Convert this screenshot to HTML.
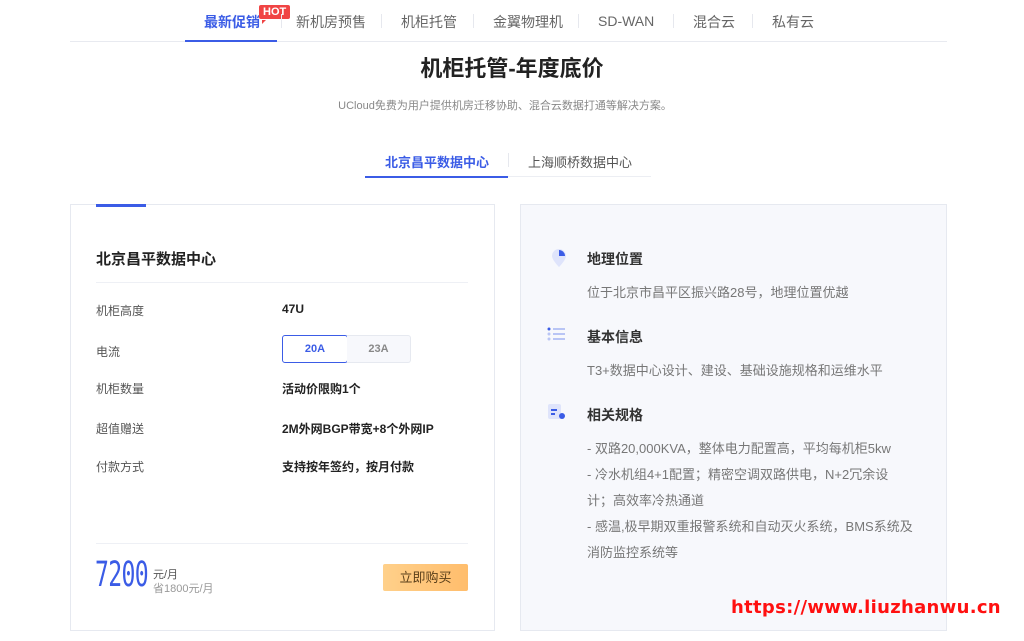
<!DOCTYPE html>
<html><head><meta charset="utf-8"><style>
*{margin:0;padding:0;box-sizing:border-box}
body{width:1024px;height:641px;overflow:hidden;background:#fff;font-family:"Liberation Sans","Noto Sans CJK SC",sans-serif;position:relative;color:#333}
.a{position:absolute;white-space:nowrap}
.nav{font-size:14px;color:#666;top:12px}
.sep{position:absolute;top:14px;width:1px;height:14px;background:#e6e8ee}
.lbl{font-size:12px;color:#555}
.val{font-size:12px;color:#222;font-weight:bold}
.rt{font-size:14px;font-weight:bold;color:#333}
.rd{font-size:13px;color:#777}
</style></head><body>
<div class="a nav" style="left:204px;color:#3b5ce6;font-weight:bold">最新促销</div>
<div class="a" style="left:259px;top:5px;background:#f04444;color:#fff;font-size:11px;font-weight:bold;padding:1px 4px;border-radius:2px">HOT</div>
<div class="a" style="left:262px;top:20px;width:0;height:0;border-left:4px solid #f04444;border-bottom:4px solid transparent"></div>
<div class="sep" style="left:281px"></div>
<div class="a nav" style="left:296px">新机房预售</div>
<div class="sep" style="left:381px"></div>
<div class="a nav" style="left:401px">机柜托管</div>
<div class="sep" style="left:473px"></div>
<div class="a nav" style="left:493px">金翼物理机</div>
<div class="sep" style="left:578px"></div>
<div class="a nav" style="left:598px;top:13px">SD-WAN</div>
<div class="sep" style="left:673px"></div>
<div class="a nav" style="left:693px">混合云</div>
<div class="sep" style="left:752px"></div>
<div class="a nav" style="left:772px">私有云</div>
<div class="a" style="left:70px;top:41px;width:877px;height:1px;background:#e8eaf0"></div>
<div class="a" style="left:185px;top:40px;width:92px;height:2px;background:#3b5ce6"></div>

<div class="a" style="left:0;width:1024px;text-align:center;top:51px;font-size:22px;font-weight:bold;color:#222">机柜托管-年度底价</div>
<div class="a" style="left:0;width:1010px;text-align:center;top:97px;font-size:11px;color:#888">UCloud免费为用户提供机房迁移协助、混合云数据打通等解决方案。</div>

<div class="a" style="left:385px;top:152px;font-size:13px;color:#3b5ce6;font-weight:bold">北京昌平数据中心</div>
<div class="sep" style="left:508px;top:153px"></div>
<div class="a" style="left:528px;top:152px;font-size:13px;color:#555">上海顺桥数据中心</div>
<div class="a" style="left:365px;top:176px;width:286px;height:1px;background:#eceef3"></div>
<div class="a" style="left:365px;top:176px;width:143px;height:2px;background:#3b5ce6"></div>

<div class="a" style="left:70px;top:204px;width:425px;height:427px;border:1px solid #e6e9f0;background:#fff"></div>
<div class="a" style="left:96px;top:204px;width:50px;height:3px;background:#3b5ce6"></div>
<div class="a" style="left:96px;top:248px;font-size:15px;font-weight:bold;color:#222">北京昌平数据中心</div>
<div class="a" style="left:96px;top:282px;width:372px;height:1px;background:#eef0f5"></div>
<div class="a lbl" style="left:96px;top:302px">机柜高度</div><div class="a val" style="left:282px;top:302px">47U</div>
<div class="a lbl" style="left:96px;top:343px">电流</div>
<div class="a" style="left:282px;top:335px;width:66px;height:28px;border:1px solid #3b5ce6;border-radius:3px;background:#fff;color:#3b5ce6;font-size:11px;font-weight:bold;text-align:center;line-height:26px">20A</div>
<div class="a" style="left:347px;top:335px;width:64px;height:28px;border:1px solid #e6e9f0;border-left:none;border-radius:0 3px 3px 0;background:#f7f8fc;color:#888;font-size:11px;font-weight:bold;text-align:center;line-height:26px">23A</div>
<div class="a lbl" style="left:96px;top:380px">机柜数量</div><div class="a val" style="left:282px;top:380px">活动价限购1个</div>
<div class="a lbl" style="left:96px;top:420px">超值赠送</div><div class="a val" style="left:282px;top:420px">2M外网BGP带宽+8个外网IP</div>
<div class="a lbl" style="left:96px;top:458px">付款方式</div><div class="a val" style="left:282px;top:458px">支持按年签约，按月付款</div>
<div class="a" style="left:96px;top:543px;width:372px;height:1px;background:#eef0f5"></div>
<div class="a" style="left:95px;top:555px;font-family:'DejaVu Sans Mono','Liberation Mono',monospace;font-size:35px;color:#3b5ce6;transform:scaleX(0.66);transform-origin:left;letter-spacing:-1px">7200</div>
<div class="a" style="left:153px;top:566px;font-size:11px;color:#555">元/月</div>
<div class="a" style="left:153px;top:580px;font-size:11px;color:#999">省1800元/月</div>
<div class="a" style="left:383px;top:564px;width:85px;height:27px;border-radius:2px;background:linear-gradient(90deg,#ffd08a,#ffbd6c);color:#5a3f1a;font-size:13px;text-align:center;line-height:27px">立即购买</div>

<div class="a" style="left:520px;top:204px;width:427px;height:427px;border:1px solid #e6e9f0;background:#f7f8fc"></div>
<svg class="a" style="left:550px;top:248px" width="18" height="20" viewBox="0 0 18 20"><path d="M9 1a7 7 0 0 1 7 7c0 4-7 11-7 11S2 12 2 8a7 7 0 0 1 7-7z" fill="#dfe4fb"/><path d="M9 2a6 6 0 0 1 6 6H9z" fill="#3b5ce6"/></svg>
<div class="a rt" style="left:587px;top:249px">地理位置</div>
<div class="a rd" style="left:587px;top:282px">位于北京市昌平区振兴路28号，地理位置优越</div>
<svg class="a" style="left:547px;top:327px" width="20" height="16"><circle cx="2" cy="2" r="1.5" fill="#3b5ce6"/><circle cx="2" cy="7" r="1.5" fill="#b9c5f5"/><circle cx="2" cy="12" r="1.5" fill="#b9c5f5"/><rect x="6" y="1" width="12" height="2" fill="#b9c5f5"/><rect x="6" y="6" width="12" height="2" fill="#b9c5f5"/><rect x="6" y="11" width="12" height="2" fill="#b9c5f5"/></svg>
<div class="a rt" style="left:587px;top:327px">基本信息</div>
<div class="a rd" style="left:587px;top:360px">T3+数据中心设计、建设、基础设施规格和运维水平</div>
<svg class="a" style="left:547px;top:403px" width="20" height="18"><rect x="1" y="1" width="13" height="15" rx="2" fill="#dfe4fb"/><rect x="4" y="6" width="6" height="2" fill="#3b5ce6"/><rect x="4" y="10" width="4" height="2" fill="#3b5ce6"/><circle cx="15" cy="13" r="3" fill="#3b5ce6"/></svg>
<div class="a rt" style="left:587px;top:405px">相关规格</div>
<div class="a rd" style="left:587px;top:438px">- 双路20,000KVA，整体电力配置高，平均每机柜5kw</div>
<div class="a rd" style="left:587px;top:464px">- 冷水机组4+1配置；精密空调双路供电，N+2冗余设</div>
<div class="a rd" style="left:587px;top:490px">计；高效率冷热通道</div>
<div class="a rd" style="left:587px;top:516px">- 感温,极早期双重报警系统和自动灭火系统，BMS系统及</div>
<div class="a rd" style="left:587px;top:542px">消防监控系统等</div>

<div class="a" style="left:731px;top:597px;font-family:'DejaVu Sans',sans-serif;font-size:18px;font-weight:bold;color:#ff1010;letter-spacing:0.3px">https://www.liuzhanwu.cn</div>
</body></html>
